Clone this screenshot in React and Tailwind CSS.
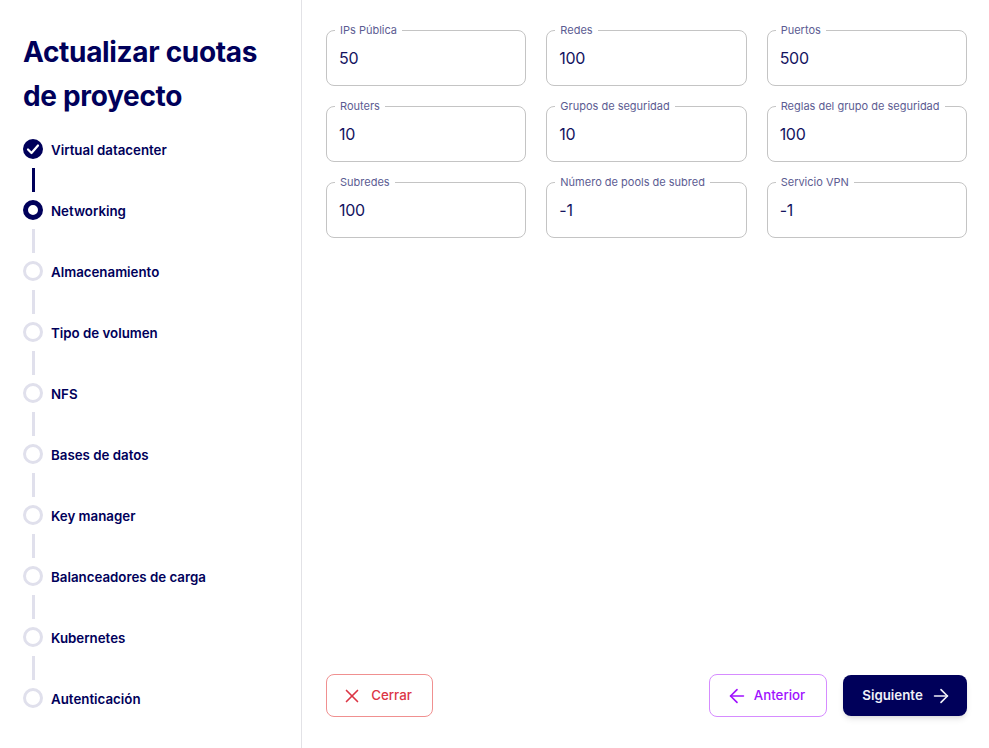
import React from "react";
import { ArrowLeft, ArrowRight, X } from "lucide-react";

const steps = ["Virtual datacenter","Networking","Almacenamiento","Tipo de volumen","NFS","Bases de datos","Key manager","Balanceadores de carga","Kubernetes","Autenticación"];
const fields = [["IPs Pública","50"],["Redes","100"],["Puertos","500"],["Routers","10"],["Grupos de seguridad","10"],["Reglas del grupo de seguridad","100"],["Subredes","100"],["Número de pools de subred","-1"],["Servicio VPN","-1"]];

function Dot({ i }) {
  if (i === 0) return (
    <svg width="20" height="20" viewBox="0 0 20 20" className="shrink-0">
      <circle cx="10" cy="10" r="10" fill="#00005a" />
      <path d="M5 10.5 L8.5 14 L15 6.5" fill="none" stroke="#fff" strokeWidth="2.2" strokeLinecap="round" strokeLinejoin="round" />
    </svg>
  );
  if (i === 1) return <div className="w-5 h-5 shrink-0 rounded-full border-[5px] border-[#00005a] bg-white" />;
  return <div className="w-5 h-5 shrink-0 rounded-full border-[3px] border-[#e0e0ec] bg-white" />;
}

export default function App() {
  return (
    <div className="w-[989px] h-[748px] flex bg-white overflow-hidden text-[#00005a] font-['Inter',sans-serif]">
      <aside className="w-[302px] shrink-0 border-r border-[#e2e2e6] pl-[23px] pt-[30px]">
        <h1 className="text-[28px] leading-[44px] font-bold tracking-[-0.32px] mb-[21px]">Actualizar cuotas<br />de proyecto</h1>
        <div className="flex flex-col">
          {steps.map((s, i) => (
            <div key={s} className="flex flex-col">
              <div className="flex items-center gap-2 h-5">
                <Dot i={i} />
                <span className="text-[13.3px] font-semibold whitespace-nowrap pt-[4px]">{s}</span>
              </div>
              {i < steps.length - 1 && <div className={`w-[3px] h-6 mt-[9px] mb-2 ml-[8.5px] ${i === 0 ? "bg-[#00005a]" : "bg-[#e0e0ec]"}`} />}
            </div>
          ))}
        </div>
      </aside>
      <main className="flex-1 flex flex-col pl-6 pr-[22px] pt-[30px] pb-[31px]">
        <div className="grid grid-cols-3 gap-x-5 gap-y-5">
          {fields.map(([l, v]) => (
            <div key={l} className="relative h-14 border border-[#c4c4c4] rounded-lg flex items-center pl-[12px]">
              <span className="absolute left-[8px] -top-2 bg-white px-[5px] text-[11px] leading-[14px] text-[#5c5c92] whitespace-nowrap">{l}</span>
              <span className="text-base text-[#14145f] tracking-[-0.3px]">{v}</span>
            </div>
          ))}
        </div>
        <div className="mt-auto flex items-center justify-between">
          <button className="h-[43px] w-[107px] border border-[#f09090] rounded-lg flex items-center justify-center gap-[8px] pr-[6px] text-[13.3px] font-medium text-[#dc3545]">
            <X size={22} strokeWidth={1.8} />Cerrar
          </button>
          <div className="flex items-center gap-4">
            <button className="h-[43px] w-[118px] border border-[#d68cff] rounded-lg flex items-center justify-center gap-[6px] pr-[5px] text-[13.3px] font-medium text-[#a010ff]">
              <ArrowLeft size={22} strokeWidth={1.8} />Anterior
            </button>
            <button className="h-[41px] w-[124px] rounded-lg bg-[#00005a] shadow-md flex items-center justify-center gap-[7px] pl-[4px] text-[13.3px] font-semibold text-[#f0f0f8]">
              Siguiente<ArrowRight size={22} strokeWidth={1.8} />
            </button>
          </div>
        </div>
      </main>
    </div>
  );
}
